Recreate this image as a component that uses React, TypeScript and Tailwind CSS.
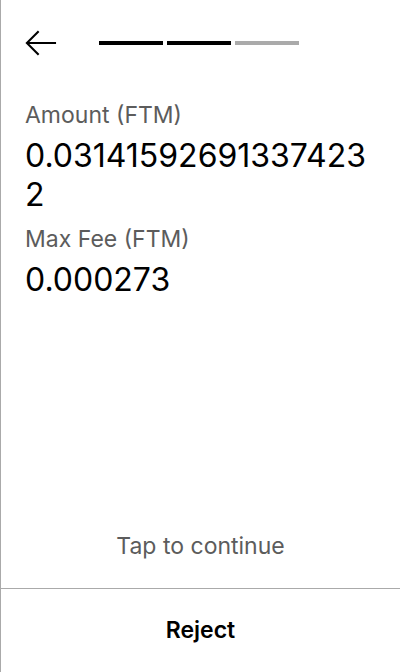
export default function App() {
  return (
    <div
      className="flex h-[672px] w-[400px] flex-col border-l border-[#aaaaaa] bg-white text-black"
      style={{ fontFamily: "Inter, 'Noto Sans', sans-serif" }}
    >
      <header className="flex h-[86px] items-center pl-6">
        <button className="flex h-8 w-8 items-center justify-center">
          <svg width="34" height="28" viewBox="0 0 34 28" fill="none">
            <path
              d="M33 14H2.5M14.5 1.5 2 14l12.5 12.5"
              stroke="#000"
              strokeWidth="2.2"
            />
          </svg>
        </button>
        <div className="ml-[42px] flex gap-1">
          <div className="h-1 w-16 bg-black" />
          <div className="h-1 w-16 bg-black" />
          <div className="h-1 w-16 bg-[#aaaaaa]" />
        </div>
      </header>

      <main className="flex-1 px-6 pt-[14px]">
        <div className="text-[23px] leading-[30px] text-[#5c5c5c]">Amount (FTM)</div>
        <div className="mt-[6px] break-all text-[32px] leading-[39px]">
          0.031415926913374232
        </div>
        <div className="mt-[10px] text-[23px] leading-[30px] text-[#5c5c5c]">Max Fee (FTM)</div>
        <div className="mt-[6px] break-all text-[32px] leading-[39px]">0.000273</div>
      </main>

      <div className="flex h-[84px] items-center justify-center text-[23px] text-[#5c5c5c]">
        Tap to continue
      </div>
      <button className="flex h-[84px] items-center justify-center border-t border-[#aaaaaa] text-[23px] font-semibold">
        Reject
      </button>
    </div>
  );
}
